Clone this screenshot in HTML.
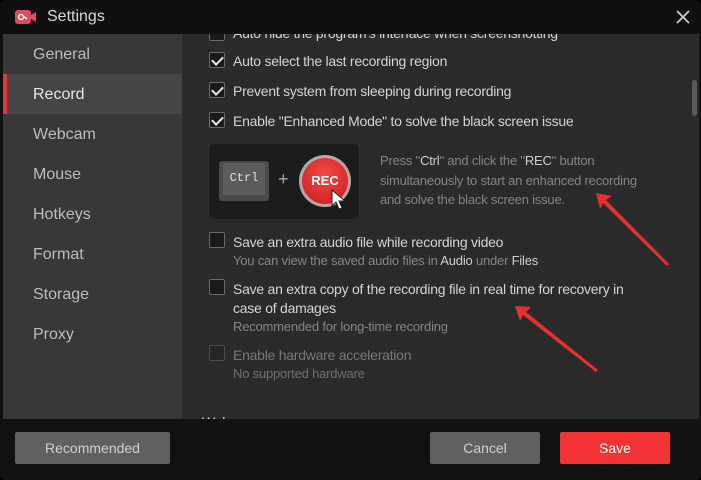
<!DOCTYPE html>
<html><head><meta charset="utf-8"><style>
*{margin:0;padding:0;box-sizing:border-box}
body{width:701px;height:480px;overflow:hidden;background:#000;font-family:"Liberation Sans",sans-serif;position:relative}
.win{position:absolute;left:0;top:0;width:701px;height:480px;background:#101011;border-radius:6px;overflow:hidden}
.abs{position:absolute}
.title{left:47px;top:8px;color:#d8d8d8;font-size:16px}
.side{left:3px;top:34px;width:179px;height:385px;background:#383838}
.main{left:182px;top:34px;width:517px;height:385px;background:#2b2b2b;overflow:hidden}
.nav{position:absolute;left:30px;color:#bdbdbd;font-size:16px}
.sel{position:absolute;left:0;top:40px;width:179px;height:40px;background:#454545}
.sel:before{content:"";position:absolute;left:0;top:0;width:4px;height:40px;background:#e8343a}
.cb{position:absolute;width:16px;height:16px;border:1px solid #6a6a6a;background:#1a1a1a;border-radius:2px}
.cb.on:after{content:"";position:absolute;left:4px;top:1px;width:5px;height:9px;border:solid #e8e8e8;border-width:0 2px 2px 0;transform:rotate(45deg)}
.t{position:absolute;font-size:14px;letter-spacing:-0.25px;color:#d4d4d4;white-space:nowrap}
.s{position:absolute;font-size:13px;letter-spacing:-0.2px;color:#858585;white-space:nowrap}
.s b{color:#cfcfcf;font-weight:normal}
.btn{position:absolute;top:432px;height:32px;line-height:32px;text-align:center;font-size:14px;color:#d0d0d0;background:#606060;border-radius:2px}
</style></head><body>
<div class="win">
<svg class="abs" style="left:15px;top:10px" width="22" height="14" viewBox="0 0 22 14"><rect x="0" y="0" width="16" height="14" rx="3" fill="#e14a5a"/><path d="M16 5l5-3v10l-5-3z" fill="#e14a5a"/><circle cx="6" cy="7" r="2.5" fill="none" stroke="#fff" stroke-width="1.5"/><path d="M8 6l4 3" stroke="#fff" stroke-width="1.5"/></svg>
<div class="abs title">Settings</div>
<svg class="abs" style="left:675px;top:9px" width="16" height="16"><path d="M2 2L14 14M14 2L2 14" stroke="#cfcfcf" stroke-width="1.8"/></svg>
<div class="abs side">
<div class="sel"></div>
<div class="nav" style="top:12px">General</div>
<div class="nav" style="top:52px;color:#e6e6e6">Record</div>
<div class="nav" style="top:92px">Webcam</div>
<div class="nav" style="top:132px">Mouse</div>
<div class="nav" style="top:172px">Hotkeys</div>
<div class="nav" style="top:212px">Format</div>
<div class="nav" style="top:252px">Storage</div>
<div class="nav" style="top:292px">Proxy</div>
</div>
<div class="abs main">
<div class="cb" style="left:27px;top:-9px"></div><div class="t" style="left:51px;top:-9px">Auto hide the program's interface when screenshotting</div>
<div class="cb on" style="left:27px;top:18px"></div><div class="t" style="left:51px;top:19px">Auto select the last recording region</div>
<div class="cb on" style="left:27px;top:48px"></div><div class="t" style="left:51px;top:49px">Prevent system from sleeping during recording</div>
<div class="cb on" style="left:27px;top:78px"></div><div class="t" style="left:51px;top:79px">Enable "Enhanced Mode" to solve the black screen issue</div>
<div class="abs" style="left:27px;top:110px;width:150px;height:75px;background:#1c1c1c;border-radius:6px">
 <div class="abs" style="left:10px;top:17px;width:50px;height:40px;background:#4a4a4a;border-radius:3px"><div class="abs" style="left:4px;top:2px;width:42px;height:32px;background:#5c5c5c;border-radius:2px;color:#e0e0e0;font:12px 'Liberation Mono',monospace;text-align:center;line-height:30px">Ctrl</div></div>
 <div class="abs" style="left:69px;top:25px;color:#aaa;font-size:18px">+</div>
 <div class="abs" style="left:90px;top:11px;width:52px;height:52px;border-radius:50%;background:#b5a8a8;padding:3px"><div style="width:46px;height:46px;border-radius:50%;background:radial-gradient(circle at 50% 35%,#f24848,#cc1a1f);color:#fff;font-weight:bold;font-size:13px;text-align:center;line-height:46px">REC</div></div>
 <svg class="abs" style="left:121px;top:44px" width="16" height="24"><path d="M2 2v16l4-4 3 7 3-1-3-7h6z" fill="#fff" stroke="#222" stroke-width="1"/></svg>
</div>
<div class="s" style="left:198px;top:117px;line-height:19.5px;width:300px">Press "<b>Ctrl</b>" and click the "<b>REC</b>" button<br>simultaneously to start an enhanced recording<br>and solve the black screen issue.</div>
<div class="cb" style="left:27px;top:198px"></div><div class="t" style="left:51px;top:200px">Save an extra audio file while recording video</div>
<div class="s" style="left:51px;top:219px">You can view the saved audio files in <b>Audio</b> under <b>Files</b></div>
<div class="cb" style="left:27px;top:245px"></div><div class="t" style="left:51px;top:247px">Save an extra copy of the recording file in real time for recovery in</div>
<div class="t" style="left:51px;top:266px">case of damages</div>
<div class="s" style="left:51px;top:285px">Recommended for long-time recording</div>
<div class="cb" style="left:27px;top:311px;border-color:#4e4e4e;background:#262626"></div><div class="t" style="left:51px;top:313px;color:#777">Enable hardware acceleration</div>
<div class="s" style="left:51px;top:332px;color:#6f6f6f">No supported hardware</div>
<div class="t" style="left:20px;top:380px;color:#e0e0e0">Webcam</div>
<div class="abs" style="left:510px;top:46px;width:5px;height:36px;background:#5a5a5a;border-radius:3px"></div>
</div>
<svg class="abs" style="left:0;top:0" width="701" height="480">
<path d="M596 193 L612 196 L606 200 L669 264 L667 266 L603 203 L600 209 Z" fill="#e8302f"/>
<path d="M515 306 L531 307 L526 312 L598 370 L596 372 L523 315 L520 321 Z" fill="#e8302f"/>
</svg>
<div class="abs" style="left:0;top:419px;width:701px;height:61px;background:#121213"></div>
<div class="btn" style="left:15px;width:155px">Recommended</div>
<div class="btn" style="left:430px;width:110px">Cancel</div>
<div class="btn" style="left:560px;width:110px;background:#f33234;color:#fff">Save</div>
</div>
</body></html>
